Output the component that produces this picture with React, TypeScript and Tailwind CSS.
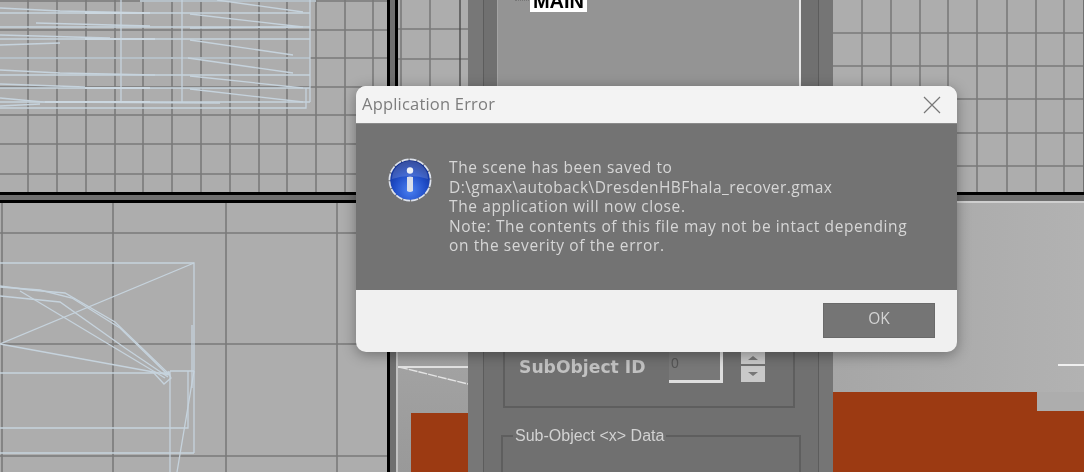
const wire = "#c6d3dd";

function Lines({ xs, ys, w, h, color = "#7a7a7a" }: { xs: number[]; ys: number[]; w: number; h: number; color?: string }) {
  return (
    <g stroke={color} strokeWidth="1.6">
      {xs.map((x) => (
        <line key={"x" + x} x1={x} y1={0} x2={x} y2={h} />
      ))}
      {ys.map((y) => (
        <line key={"y" + y} x1={0} y1={y} x2={w} y2={y} />
      ))}
    </g>
  );
}

function Wires({ paths, width = 1.3 }: { paths: string[]; width?: number }) {
  return (
    <g stroke={wire} strokeWidth={width} fill="none">
      {paths.map((d) => (
        <path key={d} d={d} />
      ))}
    </g>
  );
}

function TopLeftView() {
  return (
    <svg width="387" height="192" className="block bg-[#adadad]">
      <Lines
        w={387}
        h={192}
        xs={[28, 57, 86, 115, 143, 172, 201, 230, 259, 287, 316, 345, 373]}
        ys={[1, 30, 58, 87, 115, 144, 174]}
      />
      <Wires
        width={1.3}
        paths={[
          "M0 13H310M0 27H310M0 39H310M0 58H310M0 75H310M0 88H310M0 102H310M0 108H306V88",
          "M121 0V102M182 0V102M310 0V102M140 1H316",
          "M217 0L303 12M190 14L303 27M190 28L303 27M190 40L293 55M188 58L293 73M190 76L303 88M190 89L303 102",
          "M0 8L60 11L150 13M36 23L150 26M0 35L110 38M0 45L60 43M0 70L60 73L155 75M0 84L85 87M0 98L43 102L220 103M0 106L40 104",
        ]}
      />
      <path d="M85 13H150M85 88H150M85 39H155M45 102H150" stroke="#cbd7e0" strokeWidth="2.2" />
    </svg>
  );
}

function BottomLeftView() {
  return (
    <svg width="387" height="269" className="block bg-[#adadad]">
      <Lines w={387} h={269} xs={[2, 113, 226, 337]} ys={[30, 141, 253]} />
      <Wires
        paths={[
          "M0 60H194V250M188 168V225H0M0 250H194",
          "M0 141L194 60",
          "M0 83L30 87L65 90L115 119L170 172",
          "M0 84L40 87L72 95L120 125L168 172",
          "M0 93L60 99L125 145L168 174",
          "M20 88L115 145L165 175",
          "M0 141L170 172M0 170L170 170",
          "M153 169L164 181L171 175L168 168",
          "M170 168H194M170 168V269M194 168L177 269",
          "M192 122V185",
        ]}
      />
    </svg>
  );
}

function SmallTopView() {
  return (
    <svg width="70" height="192" className="block bg-[#adadad]">
      <Lines w={70} h={192} xs={[3, 32]} ys={[29, 59, 88, 117, 146, 175]} />
      <line x1={62} y1={0} x2={62} y2={192} stroke="#4a4a4a" strokeWidth="1.4" />
    </svg>
  );
}

function TopRightView() {
  return (
    <svg width="250" height="192" className="block bg-[#adadad]">
      <Lines w={250} h={192} xs={[29, 58, 87, 115, 144, 174, 203, 231]} ys={[33, 66, 99, 133, 166]} />
    </svg>
  );
}

function InfoIcon() {
  return (
    <svg width="44" height="44" viewBox="0 0 44 44" className="shrink-0">
      <defs>
        <radialGradient id="infoFill" cx="0.5" cy="0.75" r="0.75">
          <stop offset="0" stopColor="#4a80f2" />
          <stop offset="0.55" stopColor="#1f4cc6" />
          <stop offset="1" stopColor="#0f2a88" />
        </radialGradient>
      </defs>
      <circle cx="22" cy="22" r="20" fill="url(#infoFill)" />
      <circle cx="22" cy="22" r="20.6" fill="none" stroke="#dde2ec" strokeWidth="1.7" strokeDasharray="7 1" />
      <path d="M4 21A18 18 0 0 1 40 21Q22 15 4 21Z" fill="#ffffff" opacity="0.16" />
      <circle cx="22" cy="12.5" r="3.2" fill="#eef1f6" />
      <path d="M19 19Q22 18 25 19V33Q22 35 19 33Z" fill="#d9deea" />
    </svg>
  );
}

function Dialog() {
  return (
    <div className="absolute left-[356px] top-[86px] flex h-[266px] w-[601px] flex-col overflow-hidden rounded-[10px] bg-[#f0f0f0] font-['Open_Sans',sans-serif] shadow-[0_3px_14px_rgba(0,0,0,0.35)]">
      <div className="flex h-[37px] items-center justify-between bg-[#f3f3f3] pl-[6px] pr-[16px]">
        <span className="text-[16.5px] tracking-[0.2px] text-[#7d7d7d]">Application Error</span>
        <svg width="18" height="18" viewBox="0 0 18 18" className="text-[#777777]">
          <path d="M1 1L17 17M17 1L1 17" stroke="currentColor" strokeWidth="1.2" />
        </svg>
      </div>
      <div className="flex h-[167px] items-start gap-[17px] border-t border-[#8a8a8a] bg-[#737373] pl-[32px] pt-[34px]">
        <InfoIcon />
        <p className="text-[15.5px] leading-[19.5px] tracking-[0.6px] text-[#d6d6d6]">
          The scene has been saved to
          <br />
          <span className="tracking-[0.42px]">D:\gmax\autoback\DresdenHBFhala_recover.gmax</span>
          <br />
          The application will now close.
          <br />
          Note: The contents of this file may not be intact depending
          <br />
          on the severity of the error.
        </p>
      </div>
      <div className="flex flex-1 items-center justify-end pr-[22px]">
        <button className="mb-[1px] h-[35px] w-[112px] border border-[#6a6a6a] bg-[#757575] pb-[3px] text-[15.5px] text-[#d4d4d4]">
          OK
        </button>
      </div>
    </div>
  );
}

function CommandPanel() {
  return (
    <div className="flex h-full w-[365px] shrink-0 bg-[#707070]">
      <div className="w-[15px] bg-[#777777]" />
      <div className="flex w-[336px] flex-col border-x border-[#5c5c5c] pl-[13px] pr-[17px]">
        <div className="relative h-[200px] border-l border-[#a4a4a4] border-r-2 border-r-[#e8e8e8] bg-[#949494]">
          <div className="absolute left-[17px] top-0 w-[14px] border-t border-dotted border-[#777777]" />
          <div className="flex h-[12px] w-[57px] translate-x-[32px] items-end justify-center overflow-hidden bg-white font-['Liberation_Sans',sans-serif] text-[20px] leading-[20px] font-bold text-black">
            <span className="mb-[1px]">MAIN</span>
          </div>
        </div>
        <div className="mx-[6px] mt-[100px] flex h-[108px] items-start border-2 border-t-0 border-[#5e5e5e] pl-[14px] pt-[52px]">
          <span className="mt-[3px] w-[150px] font-['DejaVu_Sans',sans-serif] text-[17.2px] leading-[24px] font-bold text-[#c2c2c2]">
            SubObject ID
          </span>
          <div className="h-[31px] w-[54px] border-b-[3px] border-r-[3px] border-[#dedede] bg-[#787878] pl-[2px] font-['Liberation_Sans',sans-serif] text-[14px] leading-[22px] text-[#555555]">
            0
          </div>
          <div className="ml-[18px] flex w-[24px] flex-col gap-[2px]">
            <div className="flex h-[12px] items-center justify-center bg-[#c9c9c9]">
              <div className="h-0 w-0 border-x-[5px] border-b-[4px] border-x-transparent border-b-[#777777]" />
            </div>
            <div className="flex h-[16px] items-center justify-center bg-[#c9c9c9]">
              <div className="h-0 w-0 border-x-[5px] border-t-[4px] border-x-transparent border-t-[#777777]" />
            </div>
          </div>
        </div>
        <fieldset className="ml-[4px] mt-[19px] flex-1 border-2 border-b-0 border-[#5e5e5e]">
          <legend className="ml-[10px] px-[2px] font-['Liberation_Sans',sans-serif] text-[16px] leading-[18px] text-[#d2d2d2]">
            Sub-Object &lt;x&gt; Data
          </legend>
        </fieldset>
      </div>
      <div className="w-[14px] bg-[#757575]" />
    </div>
  );
}

export default function App() {
  return (
    <div className="relative flex h-[472px] w-[1084px] overflow-hidden bg-[#707070] blur-[0.35px]">
      <div className="flex w-[468px] shrink-0 flex-col">
        <div className="flex h-[192px]">
          <TopLeftView />
          <div className="w-[11px] border-x-[3px] border-black bg-[#6f6f6f]" />
          <SmallTopView />
        </div>
        <div className="h-[11px] border-y-[3px] border-black bg-[#6f6f6f]" />
        <div className="flex flex-1">
          <BottomLeftView />
          <div className="h-full w-[9px] border-l-[3px] border-black bg-[#6f6f6f]" />
          <div className="relative flex-1 border-l-2 border-[#c2c2c2] bg-gradient-to-b from-[#b0b0b0] to-[#999999]">
            <div className="mt-[163px] h-[2px] bg-[#e2e2e2]" />
            <svg width="70" height="30" className="absolute left-0 top-[163px]">
              <path d="M1 1L70 18" stroke="#e4e4e4" strokeWidth="1.4" strokeDasharray="9 1" />
            </svg>
            <div className="ml-[13px] mt-[45px] h-full bg-[#9c3a12]" />
          </div>
        </div>
      </div>
      <CommandPanel />
      <div className="flex flex-1 flex-col">
        <TopRightView />
        <div className="h-[9px] border-t-[3px] border-black bg-[#6f6f6f]" />
        <div className="flex h-[191px] flex-col border-t-2 border-[#cfcfcf] bg-gradient-to-r from-[#a6a6a6] to-[#b2b2b2]">
          <div className="ml-[225px] mt-[161px] h-[2px] bg-[#f0f0f0]" />
        </div>
        <div className="flex flex-1 bg-[#9c3a12]">
          <div className="ml-[204px] h-[19px] flex-1 bg-[#adadad]" />
        </div>
      </div>
      <Dialog />
    </div>
  );
}
